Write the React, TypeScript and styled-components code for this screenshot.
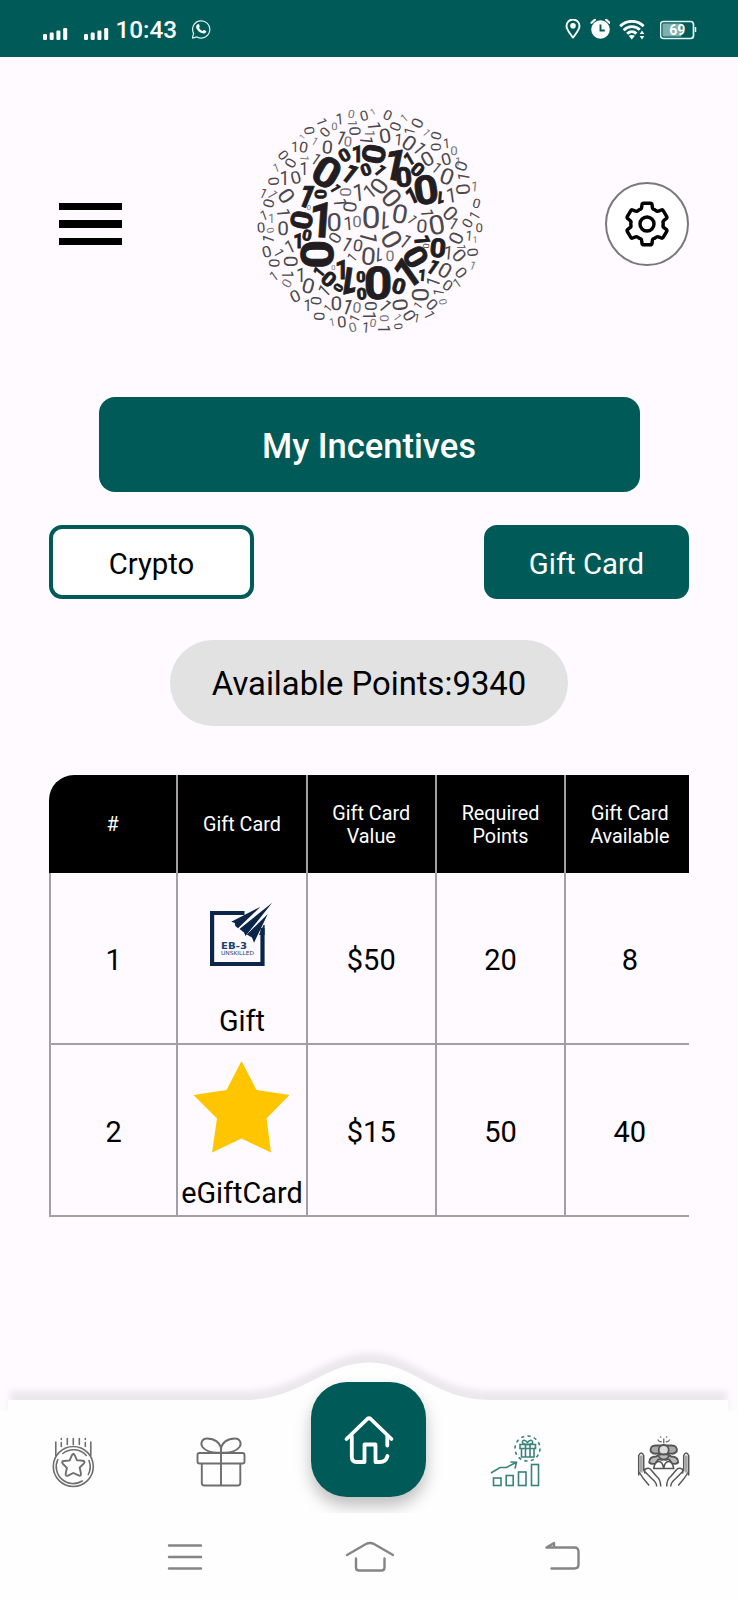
import React from "react";
import styled, { createGlobalStyle } from "styled-components";

const TEAL = "#005b58";
const PAPER = "#fefaff";
const LINE = "#a59ea4";
const ICON = "#6e6e6e";

const GlobalStyle = createGlobalStyle`
  *, *::before, *::after { box-sizing: border-box; }
  body { margin: 0; background: ${PAPER}; font-family: Roboto, "Liberation Sans", sans-serif; }
  svg { display: block; flex: none; }
  button { font: inherit; border: 0; padding: 0; background: none; color: inherit; }
`;

const Screen = styled.div`
  width: 738px;
  height: 1600px;
  display: flex;
  flex-direction: column;
  overflow: hidden;
  background: ${PAPER};
  color: #000;
`;

const StatusBar = styled.div`
  height: 57px;
  flex: none;
  padding: 2px 41px 0 43px;
  display: flex;
  align-items: center;
  justify-content: space-between;
  background: ${TEAL};
  color: #fff;
`;

const StatusGroup = styled.div<{ $gap: number }>`
  display: flex;
  align-items: center;
  gap: ${(p) => p.$gap}px;
`;

const Signals = styled.div`
  display: flex;
  gap: 16px;
  padding-top: 8px;
`;

const Clock = styled.span`
  font-size: 24.3px;
  line-height: 29px;
  font-weight: 500;
  width: 61px;
  white-space: nowrap;
  margin: 0 7px 0 -1.5px;
`;

const Header = styled.header`
  height: 334px;
  flex: none;
  padding: 0 49px 0 59px;
  display: grid;
  grid-template-columns: 83px 1fr 84px;
  align-items: center;
`;

const MenuButton = styled.button`
  width: 63px;
  display: flex;
  flex-direction: column;
  gap: 10px;
`;

const MenuBar = styled.span`
  height: 7.5px;
  background: #000;
`;

const LogoWrap = styled.div`
  justify-self: center;
  margin: 0 10px 6px 0;
`;

const GearButton = styled.button`
  width: 84px;
  height: 84px;
  border-radius: 50%;
  border: 2.5px solid #7b787b;
  background: #fff;
  display: flex;
  align-items: center;
  justify-content: center;
`;

const Title = styled.h1`
  width: 541px;
  height: 95px;
  margin: 6px auto 0;
  border-radius: 16px;
  background: ${TEAL};
  color: #fff;
  font-size: 34.6px;
  font-weight: 500;
  display: flex;
  align-items: center;
  justify-content: center;
  padding-top: 2px;
`;

const Tabs = styled.div`
  display: flex;
  justify-content: space-between;
  padding: 0 49px;
  margin-top: 33px;
`;

const Tab = styled.button<{ $active?: boolean }>`
  width: 205px;
  height: 74px;
  border-radius: 13px;
  border: 4px solid ${TEAL};
  background: ${(p) => (p.$active ? TEAL : "#fff")};
  color: ${(p) => (p.$active ? "#fff" : "#000")};
  font-size: 29.3px;
  padding-top: 3px;
`;

const Points = styled.div`
  width: 398px;
  height: 86px;
  margin: 41px auto 0;
  border-radius: 43px;
  background: #e2e2e2;
  font-size: 32.8px;
  display: flex;
  align-items: center;
  justify-content: center;
  white-space: nowrap;
  padding-top: 2px;
`;

const TableWrap = styled.div`
  width: 640px;
  margin: 49px 49px 0;
  overflow: hidden;
  border-top-left-radius: 25px;
`;

const Row = styled.div`
  width: 647px;
  display: grid;
  grid-template-columns: repeat(5, 129.3px);
`;

const HeadCell = styled.div`
  height: 98px;
  display: flex;
  align-items: center;
  justify-content: center;
  text-align: center;
  background: #000;
  color: #fff;
  border-right: 2px solid ${LINE};
  font-size: 19.8px;
  line-height: 23.5px;
  padding: 2px 20px 0;
`;

const Cell = styled.div`
  height: 172px;
  display: flex;
  flex-direction: column;
  align-items: center;
  justify-content: center;
  border-right: 2px solid ${LINE};
  border-bottom: 2px solid ${LINE};
  font-size: 29px;
  line-height: 34px;
  white-space: nowrap;
  padding-top: 4px;
  &:first-child { border-left: 2px solid ${LINE}; }
`;

const CardCell = styled(Cell)`
  justify-content: flex-start;
  padding-top: 12px;
  gap: 18.5px;
  font-size: 28.8px;
`;

const BottomNav = styled.nav`
  position: relative;
  margin-top: auto;
  height: 113px;
  flex: none;
  display: grid;
  grid-template-columns: repeat(5, 1fr);
  justify-items: center;
  padding-top: 34px;
`;

const NavBackdrop = styled.svg`
  position: absolute;
  left: 0;
  top: -60px;
`;

const NavItem = styled.button`
  position: relative;
  width: 56px;
  height: 56px;
`;

const HomeButton = styled.button`
  position: relative;
  width: 115px;
  height: 115px;
  margin-top: -52px;
  border-radius: 36px;
  background: ${TEAL};
  box-shadow: 0 9px 16px rgba(0, 0, 0, 0.25);
  display: flex;
  align-items: center;
  justify-content: center;
`;

const SystemNav = styled.div`
  position: relative;
  height: 87px;
  flex: none;
  display: flex;
  justify-content: space-between;
  padding: 23px 145px 0 155px;
  background: #fefefe;
`;

type Kind = "b" | "n" | "l";
type Digit = [string, number, number, number, number, Kind?];

/* glyph, centre x, centre y, glyph height, rotation, tone */
const digits: Digit[] = [
  ["0", 243, 222, 90, 30, "b"], ["0", 295, 171, 38, -30, "b"], ["1", 332, 166, 50, 0, "b"],
  ["0", 384, 168, 68, 100, "b"], ["1", 443, 198, 94, 12, "b"], ["0", 473, 237, 58, -5, "b"],
  ["1", 487, 183, 38, -30, "b"], ["0", 515, 214, 40, 40, "b"], ["0", 540, 275, 86, -8, "b"],
  ["1", 495, 293, 48, -25, "b"], ["1", 585, 300, 36, 185, "b"], ["1", 311, 224, 58, 38, "b"],
  ["0", 360, 215, 36, -20, "b"], ["1", 402, 215, 36, 50, "b"], ["1", 268, 270, 30, 60, "b"],
  ["1", 180, 292, 70, 22, "b"], ["0", 224, 289, 34, 90, "b"], ["0", 167, 366, 64, 100, "b"],
  ["1", 221, 364, 106, 4, "b"], ["1", 155, 427, 44, 0, "b"], ["0", 183, 411, 32, 10, "b"],
  ["0", 215, 469, 98, 90, "b"], ["1", 217, 523, 34, -50, "b"], ["0", 249, 543, 44, 40, "b"],
  ["1", 285, 515, 58, 0, "b"], ["1", 313, 551, 82, 188, "b"], ["0", 277, 569, 26, 120, "b"],
  ["0", 345, 537, 32, 0, "b"], ["0", 347, 587, 34, -5, "b"], ["0", 396, 553, 98, 0, "b"],
  ["0", 459, 564, 46, 15, "b"], ["1", 479, 526, 90, -35, "b"], ["0", 509, 476, 68, 60, "b"],
  ["1", 527, 531, 34, 5, "b"], ["1", 560, 505, 44, 35, "b"], ["1", 529, 424, 46, 85, "b"],
  ["0", 576, 449, 56, 5, "b"], ["0", 539, 444, 20, 90, "n"],
  ["0", 399, 264, 54, -55], ["0", 437, 300, 60, 50], ["1", 335, 283, 56, -5], ["1", 369, 281, 46, -38],
  ["0", 300, 282, 36, 90, "l"], ["1", 283, 311, 42, 85], ["0", 312, 327, 42, 95], ["0", 375, 357, 72, 0],
  ["1", 418, 368, 58, 183], ["0", 462, 347, 60, 10], ["0", 265, 373, 58, 0], ["1", 305, 376, 44, -5],
  ["0", 333, 371, 36, 0, "l"], ["1", 369, 416, 56, 105], ["0", 437, 424, 62, 60], ["1", 478, 428, 46, 38],
  ["0", 267, 419, 38, -60], ["1", 302, 437, 48, 30], ["0", 336, 442, 38, 10], ["0", 367, 474, 56, 5],
  ["1", 400, 471, 46, 183], ["0", 432, 474, 34, 0, "l"], ["1", 317, 479, 32, -50], ["1", 498, 363, 34, 55],
  ["0", 528, 384, 42, 5], ["1", 544, 343, 40, 85], ["0", 572, 380, 62, -10], ["0", 613, 346, 46, 45],
  ["1", 622, 376, 40, 30], ["0", 316, 48, 26, 10, "l"], ["0", 354, 53, 32, -15], ["1", 380, 42, 20, -30, "l"],
  ["0", 425, 51, 32, 25], ["1", 227, 70, 32, 70], ["1", 279, 63, 36, -5], ["1", 321, 74, 30, 90, "l"],
  ["1", 385, 82, 42, 85], ["1", 473, 60, 26, -40, "l"], ["0", 514, 75, 36, -65], ["0", 190, 98, 32, 80],
  ["0", 237, 102, 32, -50], ["0", 265, 86, 24, 0, "l"], ["0", 327, 99, 36, 88], ["1", 373, 105, 32, 90, "l"],
  ["0", 417, 113, 46, -10], ["0", 448, 85, 34, -70], ["1", 490, 101, 34, -75], ["1", 541, 103, 26, 50, "l"],
  ["0", 570, 113, 32, -75], ["0", 569, 147, 32, 90], ["1", 600, 136, 32, -5], ["0", 624, 157, 28, 0, "l"],
  ["1", 168, 117, 18, -50, "l"], ["1", 145, 147, 34, 0], ["0", 173, 147, 34, 10], ["1", 206, 129, 26, 30, "l"],
  ["0", 244, 147, 42, 5], ["1", 284, 118, 46, 25], ["0", 306, 130, 32, 5, "l"], ["1", 362, 125, 42, 95],
  ["1", 456, 124, 38, 5], ["0", 490, 135, 48, 35], ["1", 520, 149, 44, 50], ["0", 544, 182, 46, -30],
  ["0", 600, 183, 38, -15], ["0", 645, 204, 38, -70], ["1", 634, 190, 28, 5, "l"], ["1", 571, 208, 36, 40],
  ["0", 603, 235, 52, 20], ["0", 112, 171, 32, 50], ["0", 133, 195, 34, -60], ["1", 176, 180, 28, 95, "l"],
  ["1", 209, 182, 38, 35], ["1", 89, 209, 28, -20, "l"], ["1", 172, 212, 42, 0], ["1", 113, 241, 46, 0],
  ["0", 149, 238, 40, -15], ["0", 83, 250, 34, 85], ["1", 652, 238, 38, -80], ["0", 651, 274, 44, 85],
  ["1", 684, 265, 32, 5, "l"], ["1", 614, 292, 48, -8], ["0", 692, 316, 30, 15], ["1", 685, 354, 34, -60],
  ["0", 664, 375, 32, -60], ["0", 700, 390, 28, 0], ["1", 668, 413, 32, 5], ["0", 630, 420, 44, -65],
  ["1", 686, 424, 22, 0, "l"], ["0", 640, 472, 42, 50], ["0", 680, 463, 34, 85], ["1", 605, 464, 44, 5],
  ["1", 645, 446, 28, 90], ["1", 679, 502, 28, 20, "l"], ["0", 645, 524, 36, 50], ["0", 597, 517, 48, 30],
  ["1", 632, 555, 30, -35], ["0", 605, 562, 34, 35], ["1", 560, 553, 44, -70], ["1", 577, 584, 34, -80],
  ["0", 591, 611, 24, 80, "l"], ["0", 524, 590, 54, 90], ["0", 558, 619, 36, 45], ["1", 515, 623, 28, -55],
  ["1", 550, 649, 34, 65], ["0", 490, 652, 38, 60], ["1", 511, 660, 28, 10], ["0", 463, 620, 48, 85],
  ["1", 417, 622, 42, 50], ["1", 454, 657, 26, 55, "l"], ["0", 416, 661, 28, 90, "l"], ["0", 457, 685, 26, 85],
  ["1", 414, 691, 40, 90], ["1", 370, 651, 42, 90], ["0", 374, 624, 38, 90], ["0", 381, 675, 26, 10, "l"],
  ["1", 358, 688, 34, 5], ["0", 320, 688, 30, -15, "l"], ["0", 287, 671, 36, -5], ["1", 325, 662, 32, -65],
  ["1", 257, 672, 26, -10, "l"], ["0", 221, 655, 34, 90], ["1", 244, 631, 26, -50], ["0", 271, 616, 44, 0],
  ["1", 303, 626, 50, 20], ["0", 333, 628, 34, 5, "l"], ["0", 210, 608, 34, 95], ["1", 183, 621, 38, 0],
  ["0", 147, 594, 38, -25], ["1", 233, 579, 42, -45], ["0", 187, 563, 48, 15], ["0", 122, 556, 30, -60, "l"],
  ["1", 163, 530, 46, 0], ["1", 125, 528, 38, 90], ["1", 82, 535, 32, -35], ["0", 135, 490, 44, 90],
  ["0", 84, 495, 34, 90], ["1", 98, 463, 32, 60], ["0", 62, 461, 36, -15], ["1", 130, 446, 42, -25],
  ["1", 66, 424, 38, -70], ["0", 73, 397, 22, 80, "l"], ["0", 45, 388, 32, -5], ["0", 111, 391, 44, 0],
  ["1", 113, 342, 42, 85], ["1", 52, 352, 32, -20], ["1", 75, 360, 30, 0, "l"], ["0", 68, 316, 34, -75],
  ["1", 51, 285, 32, 25], ["1", 79, 288, 34, 60, "l"], ["0", 121, 293, 50, 55], ["0", 189, 328, 16, 0, "l"],
  ["0", 262, 508, 16, 0, "l"],
];

const tone: Record<Kind, { fill: string; weight: number; stroke: number; scale: number }> = {
  b: { fill: "#211d20", weight: 700, stroke: 2.5, scale: 1 },
  n: { fill: "#4c484c", weight: 400, stroke: 0, scale: 0.93 },
  l: { fill: "#777377", weight: 400, stroke: 0, scale: 0.93 },
};

const Logo = () => (
  <svg width="246" height="246" viewBox="0 0 738 738" fontFamily="Roboto, sans-serif" textAnchor="middle" textRendering="geometricPrecision" aria-hidden="true">
    {digits.map(([ch, x, y, size, rot, kind = "n"], i) => {
      const t = tone[kind];
      const h = size * t.scale;
      return (
        <text
          key={i}
          transform={`translate(${x} ${y}) rotate(${rot}) scale(${ch === "0" ? 1.1 : 0.9} 1)`}
          x={ch === "1" ? h * 0.06 : 0}
          y={h / 2}
          fontSize={h / 0.72}
          fontWeight={t.weight}
          fill={t.fill}
          stroke={t.fill}
          strokeWidth={t.stroke}
        >
          {ch}
        </text>
      );
    })}
  </svg>
);

const Signal = () => (
  <svg width="25" height="12" viewBox="0 0 25 12" fill="#fff">
    <rect x="0" y="6" width="4" height="6" rx="1.2" />
    <rect x="6.7" y="4.5" width="4" height="7.5" rx="1.2" />
    <rect x="13.4" y="2.5" width="4" height="9.5" rx="1.2" />
    <rect x="20.2" y="0" width="4" height="12" rx="1.2" />
  </svg>
);

const ChatIcon = () => (
  <svg width="20" height="20" viewBox="0.7 0.8 20 20">
    <path d="M1 19l1.3-4.8A8.6 8.6 0 1 1 5.7 17.7z" fill="none" stroke="#d8f0ee" strokeWidth="1.2" strokeLinejoin="round" />
    <path d="M6.3 5.1c.7-.5 1.3-.3 1.5.3l.7 1.7c.1.5-.5 1-.8 1.4.8 1.5 2 2.6 3.7 3.3.5-.4.9-1.3 1.5-1l1.8.9c.5.3.2 1.4-.3 1.9-1 .9-2.5.9-3.9.3-2.7-1-4.7-3-5.5-5.2-.4-1.5 0-2.800 1.300-3.600z" fill="#fff" />
  </svg>
);

const PinIcon = () => (
  <svg width="16" height="21" viewBox="0 0.7 16 21">
    <path d="M8 19.300C4.500 14.700 1.500 11.300 1.500 7.700a6.500 6.500 0 0 1 13 0c0 3.600-3 7-6.500 11.600z" fill="none" stroke="#fff" strokeWidth="1.9" strokeLinejoin="round" />
    <circle cx="8" cy="7.5" r="2.8" fill="#fff" />
  </svg>
);

const AlarmIcon = () => (
  <svg width="20" height="21" viewBox="-0.5 0.5 20 21">
    <circle cx="10" cy="11" r="9.3" fill="#fff" />
    <path d="M1 4.3L4.4 1.2M19 4.3L15.6 1.2" stroke="#fff" strokeWidth="2.2" strokeLinecap="round" />
    <path d="M10 6v6h4.3" stroke={TEAL} strokeWidth="1.9" fill="none" />
  </svg>
);

const WifiIcon = () => (
  <svg width="26" height="20" viewBox="0 0 26 20" fill="none" stroke="#fff" strokeWidth="2.9">
    <path d="M1.2 6.2C8-.2 18-.2 24.6 6.2" />
    <path d="M4.7 10.2C9.5 5.5 16.5 5.5 20.8 9.7" />
    <path d="M8.2 13.7c2.8-2.7 6.6-2.7 9.2-.1" />
    <path d="M9.7 15.8q3.1-1.8 6.2 0L12.8 19.5z" fill="#fff" stroke="none" />
    <path d="M23 10.5l2.3 3.5h-4.6zM23 19.5l2.3-3.5h-4.6z" fill="#fff" stroke="none" />
  </svg>
);

const BatteryIcon = () => (
  <svg width="37" height="20" viewBox="0.500 0 37 20">
    <rect x="1" y="1.5" width="33" height="17" rx="3" fill="none" stroke="#e3f3f1" strokeWidth="1.7" />
    <rect x="3" y="3.5" width="19" height="13" rx="1" fill="#7fb0ad" />
    <path d="M36 7v5" stroke="#e3f3f1" strokeWidth="1.5" />
    <text x="17.8" y="15" textAnchor="middle" fontFamily="Roboto, sans-serif" fontSize="14" fontWeight="700" fill="#fff">69</text>
  </svg>
);

/* six-toothed gear outline, one tooth every 60 degrees */
const gearPath = (() => {
  const at = (deg: number, r: number) => {
    const a = ((deg - 90) * Math.PI) / 180;
    return `${(24 + r * Math.cos(a)).toFixed(2)} ${(24 + r * Math.sin(a)).toFixed(2)}`;
  };
  let d = "";
  for (let k = 0; k < 6; k++) {
    const c = k * 60;
    d += `${k ? "L" : "M"}${at(c - 17, 18)} L${at(c - 14.5, 20)} Q${at(c - 13, 21.3)} ${at(c - 9, 21)} L${at(c + 9, 21)} Q${at(c + 13, 21.3)} ${at(c + 14.5, 20)} L${at(c + 17, 18)} Q${at(c + 20, 15.6)} ${at(c + 27, 16.2)} L${at(c + 33, 16.2)} Q${at(c + 40, 15.6)} ${at(c + 43, 18)}`;
  }
  return d + "Z";
})();

const GearIcon = () => (
  <svg width="48" height="48" viewBox="0 0 48 48" fill="none" stroke="#000" strokeWidth="3.4" strokeLinejoin="round">
    <path d={gearPath} />
    <circle cx="24" cy="24" r="7" />
  </svg>
);

const AgencyLogo = () => (
  <svg width="100" height="100" viewBox="0.5 0 100 100" fill="#0b2649">
    <path d="M53 28H20.600V79H71V43" fill="none" stroke="#0b2649" strokeWidth="4.2" />
    <path d="M39.700 36.700L69 21.700 46.500 43.300 43.800 41 43.300 38z" />
    <path d="M48 44L80.700 17.700 54 51 52.500 47.500z" />
    <path d="M55.300 49.500L76.300 29 62.500 57.700 60.500 52.500z" />
    <path d="M67.500 50l4.500-10h1.100v10z" />
    <text x="29.500" y="64" fontFamily="'DejaVu Sans', sans-serif" fontSize="8.800" fontWeight="700" fill="#1d4270" textLength="26" lengthAdjust="spacingAndGlyphs">EB-3</text>
    <text x="29.500" y="70.300" fontFamily="'DejaVu Sans', sans-serif" fontSize="5.600" fill="#1d4270" textLength="33" lengthAdjust="spacingAndGlyphs">UNSKILLED</text>
  </svg>
);

const StarImage = () => (
  <svg width="100" height="100" viewBox="0.5 0.5 100 100">
    <path d="M50 4.500L65 33.500 98 38.500 75 62 79.500 96 50 82 20.500 96 25.500 62 2 38.500 35 33.500z" fill="#ffc600" />
  </svg>
);

const CoinIcon = () => (
  <svg width="56" height="56" viewBox="0.7 0.5 56 56" fill="none" stroke={ICON} strokeWidth="1.6" strokeLinecap="round">
    <circle cx="28" cy="33" r="20" />
    <path d="M17.500 20A17 17 0 0 1 41 22M43.700 27A17 17 0 0 1 43 41M37 47.500A17 17 0 0 1 12.500 26" />
    <path d="M28 20.500q1 0 1.600 1.500l2 4.700 5.800.6q3 .6 1 2.800l-4 4 1.200 5.800q.4 3.200-2.300 2L28 39.500l-5.300 2.600q-2.700 1-2.300-2l1.200-5.800-4-4q-2-2.200 1-2.800l5.800-.6 2-4.700q.6-1.500 1.600-1.500z" strokeWidth="1.900" />
    <path d="M10.500 22V8.500M45.500 22V8.500M16 5v1M16 9v4M22 5v6M28 5v6M34 5v6M40 5v1M40 9v4" />
  </svg>
);

const GiftIcon = () => (
  <svg width="56" height="56" viewBox="0 0.500 56 56" fill="none" stroke={ICON} strokeWidth="1.900">
    <rect x="4.500" y="19.500" width="47" height="10.500" rx="2" />
    <path d="M8.800 30v19.500q0 2.500 2.500 2.500h33.500q2.500 0 2.500-2.500V30M28 19v33" />
    <path d="M28 19C29 8 20 5 14 5c-5 0-7 5-4.500 8.500C13 18 20 19.500 28 19zM28 19C27 8 36 5 42 5c5 0 7 5 4.500 8.500C43 18 36 19.500 28 19z" />
  </svg>
);

const HomeIcon = () => (
  <svg width="52" height="52" viewBox="0 0 52 52" fill="none" stroke="#fff" strokeWidth="3.800" strokeLinecap="round" strokeLinejoin="round">
    <path d="M3.500 25L24.300 5q1.700-1.500 3.400 0L48.500 25" />
    <path d="M8.800 22.500V43q0 5 5 5h7.700V30.500h11V48h4.500q6 0 7.500-6M44.300 22.500V31.500" />
  </svg>
);

const ChartIcon = () => (
  <svg width="56" height="56" viewBox="0.500 0.500 56 56" fill="none" stroke="#39837d" strokeWidth="1.600">
    <rect x="5" y="44.500" width="7.500" height="7.500" />
    <rect x="17.700" y="42" width="7" height="10" />
    <rect x="30" y="38.500" width="7.500" height="13.500" />
    <rect x="43" y="31" width="7" height="21" />
    <path d="M2.500 39.500L11.500 34H18L27.500 29M22 28.500L28 28.800 26.500 35" />
    <circle cx="39" cy="15" r="12.500" strokeDasharray="3.200 3.300" />
    <path d="M31.500 11h15.500v4h-15.500zM33 15h12.500v8.500H33zM37 11v12.500M41.500 11v12.500" />
    <path d="M39 11q-6 0-5-3t5 1q3.500-4 5-1t-5 3z" />
  </svg>
);

const HandsIcon = () => (
  <svg width="56" height="56" viewBox="0.300 0.500 56 56" fill="none" stroke="#555" strokeWidth="1.500" strokeLinejoin="round">
    <path d="M3 42V22q2.500-5 5 0v15l8 8q5 4 5 8M3 38q4 7 10.500 14M9 40V36q4-2.500 6 0l6 7q4 3 4 10" />
    <path d="M53 42V22q-2.500-5-5 0v15l-8 8q-5 4-5 8M53 38q-4 7-10.500 14M47 40V36q-4-2.500-6 0l-6 7q-4 3-4 10" />
    <path d="M5.500 22v17M50.500 22v17" stroke="#a5a5a5" strokeWidth="3" />
    <path d="M15 18q-1-6 5-6h16q6 0 5 6-3 3-6 2H21q-3 1-6-2z" fill="#aaa" strokeWidth="1.800" />
    <circle cx="28" cy="16.500" r="5" strokeWidth="1.800" fill="#ddd" />
    <path d="M13.500 29q0-6 7-6 3-3 7.500-2 4.500-1 7.500 2 7 0 7 6-2 2-6 1l-3-4h-11l-3 4q-4 1-6-1z" strokeWidth="1.800" fill="#bbb" />
    <path d="M18 35q1-7 5-7t5 7q1-7 5-7t5 7zM22 22l5 5M34 22l-5 5" strokeWidth="1.700" />
    <path d="M22 6q1.500 3 4 2M34 6q-1.500 3-4 2M28 5v5M24.500 3l1 1M31.500 3l-1 1" stroke="#777" strokeWidth="1.400" />
  </svg>
);

const SystemIcon = ({ children }: { children: React.ReactNode }) => (
  <svg width="60" height="44" viewBox="0 0 60 44" fill="none" stroke="#858585" strokeWidth="2.400" strokeLinecap="round" strokeLinejoin="round">
    {children}
  </svg>
);

const headings = ["#", "Gift Card", "Gift Card Value", "Required Points", "Gift Card Available"];

const cards = [
  { id: 1, name: "Gift", image: <AgencyLogo />, value: "$50", points: 20, available: 8 },
  { id: 2, name: "eGiftCard", image: <StarImage />, value: "$15", points: 50, available: 40 },
];

export default function App() {
  return (
    <Screen>
      <GlobalStyle />
      <StatusBar>
        <StatusGroup $gap={8}>
          <Signals>
            <Signal />
            <Signal />
          </Signals>
          <Clock>10:43</Clock>
          <ChatIcon />
        </StatusGroup>
        <StatusGroup $gap={9}>
          <PinIcon />
          <AlarmIcon />
          <StatusGroup $gap={15}>
            <WifiIcon />
            <BatteryIcon />
          </StatusGroup>
        </StatusGroup>
      </StatusBar>

      <Header>
        <MenuButton aria-label="Menu">
          <MenuBar />
          <MenuBar />
          <MenuBar />
        </MenuButton>
        <LogoWrap>
          <Logo />
        </LogoWrap>
        <GearButton aria-label="Settings">
          <GearIcon />
        </GearButton>
      </Header>

      <Title>My Incentives</Title>

      <Tabs>
        <Tab>Crypto</Tab>
        <Tab $active>Gift Card</Tab>
      </Tabs>

      <Points>Available Points:9340</Points>

      <TableWrap>
        <Row>
          {headings.map((h) => (
            <HeadCell key={h}>{h}</HeadCell>
          ))}
        </Row>
        {cards.map((c) => (
          <Row key={c.id}>
            <Cell>{c.id}</Cell>
            <CardCell>
              {c.image}
              <span>{c.name}</span>
            </CardCell>
            <Cell>{c.value}</Cell>
            <Cell>{c.points}</Cell>
            <Cell>{c.available}</Cell>
          </Row>
        ))}
      </TableWrap>

      <BottomNav>
        <NavBackdrop width="738" height="173" viewBox="0 1340 738 173">
          <defs>
            <filter id="soft" x="-5%" y="-30%" width="110%" height="160%">
              <feGaussianBlur stdDeviation="3" />
            </filter>
          </defs>
          <path
            d="M10 1391H245C300 1391 325 1353 369 1353S435 1391 490 1391H727V1412H10Z"
            fill="#ebe8ec"
            filter="url(#soft)"
          />
          <path d="M8 1400H245C300 1400 325 1362.500 369 1362.500S435 1400 490 1400H728V1411H738V1513H0V1411H8Z" fill="#fefefe" />
        </NavBackdrop>
        <NavItem aria-label="Rewards"><CoinIcon /></NavItem>
        <NavItem aria-label="Gifts"><GiftIcon /></NavItem>
        <HomeButton aria-label="Home"><HomeIcon /></HomeButton>
        <NavItem aria-label="Incentives"><ChartIcon /></NavItem>
        <NavItem aria-label="Community"><HandsIcon /></NavItem>
      </BottomNav>

      <SystemNav>
        <SystemIcon>
          <path d="M14 9.500h32M14 21h32M14 32.500h32" />
        </SystemIcon>
        <SystemIcon>
          <path d="M3 19L22 8q4-2 8 0L49 19M12 22.500v9q0 3 3 3h22.500q3 0 3-3v-9" />
        </SystemIcon>
        <SystemIcon>
          <path d="M18.500 32.500H41.500q4 0 4-4V15.500q0-4-4-4H13.500L21 7v4" />
        </SystemIcon>
      </SystemNav>
    </Screen>
  );
}
